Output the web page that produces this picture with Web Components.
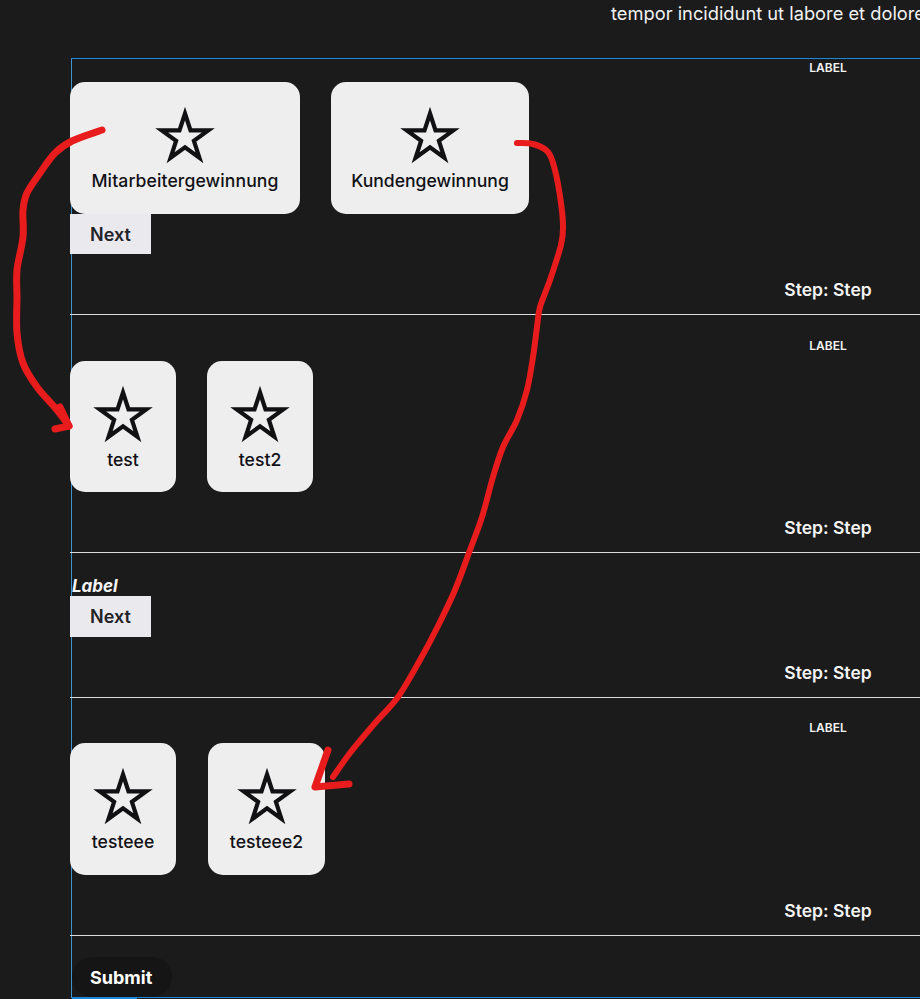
<!DOCTYPE html>
<html lang="de">
<head>
<meta charset="utf-8">
<title>Form</title>
<style>
  html, body {
    margin: 0;
    height: 100%;
    overflow: hidden;
    background: #1b1b1b;
    color: #f4f4f4;
    font-family: Inter, "Liberation Sans", sans-serif;
  }
</style>
</head>
<body>
<page-intro>tempor incididunt ut labore et dolore</page-intro>

<wizard-form>
  <form-step top="23" label="LABEL" label-top="1">
    <div style="display:flex;gap:31px">
      <choice-card style="width:230px;letter-spacing:.1px">Mitarbeitergewinnung</choice-card>
      <choice-card style="width:198px">Kundengewinnung</choice-card>
    </div>
    <flat-button>Next</flat-button>
  </form-step>
  <form-step top="46" label="LABEL" label-top="23">
    <div style="display:flex;gap:31px">
      <choice-card style="width:106px;height:131px">test</choice-card>
      <choice-card style="width:106px;height:131px">test2</choice-card>
    </div>
  </form-step>
  <form-step top="23">
    <field-label>Label</field-label>
    <flat-button style="height:41px">Next</flat-button>
  </form-step>
  <form-step top="45" label="LABEL" label-top="22">
    <div style="display:flex;gap:32px">
      <choice-card style="width:106px">testeee</choice-card>
      <choice-card style="width:117px">testeee2</choice-card>
    </div>
  </form-step>
  <submit-button slot="footer">Submit</submit-button>
</wizard-form>

<red-annotation></red-annotation>

<script>
class PageIntro extends HTMLElement {
  constructor() {
    super();
    this.attachShadow({ mode: "open" });
  }

  connectedCallback() {
    this.shadowRoot.innerHTML = /* html */`
    <style>
      :host {
        display: block;
        height: 58px;
        padding-left: 611px;
        white-space: nowrap;
        font-size: 18.3px;
        line-height: 27px;
        color: #f2f2f2;
      }
    </style>
    <slot></slot>`;
  }
}

class WizardForm extends HTMLElement {
  constructor() {
    super();
    this.attachShadow({ mode: "open" });
  }

  connectedCallback() {
    this.shadowRoot.innerHTML = /* html */`
    <style>
      :host {
        display: block;
        margin-left: 71px;
        border-top: 1px solid #1e88d8;
        border-left: 1px solid #3f93cf;
      }

      .steps {
        margin-left: -2px;
      }

      .footer {
        padding-top: 21px;
      }

      .progress {
        height: 1px;
        background: #1e88d8;
      }

      .progress div {
        width: 65px;
        height: 2px;
        background: #1e88d8;
      }
    </style>
    <div class="steps"><slot></slot></div>
    <div class="footer"><slot name="footer"></slot></div>
    <div class="progress"><div></div></div>`;
  }
}

class FormStep extends HTMLElement {
  constructor() {
    super();
    this.attachShadow({ mode: "open" });
  }

  connectedCallback() {
    const label = this.getAttribute("label");
    const labelTop = this.getAttribute("label-top") || 0;
    this.shadowRoot.innerHTML = /* html */`
    <style>
      :host {
        display: grid;
        grid-template-columns: 1fr 184px;
        border-bottom: 1px solid #dcdcdc;
      }

      .main {
        padding-top: ${this.getAttribute("top")}px;
        padding-bottom: 60px;
      }

      .side {
        display: flex;
        flex-direction: column;
        justify-content: flex-end;
        align-items: center;
        padding-bottom: 13px;
      }

      .label {
        margin-top: ${labelTop}px;
        margin-bottom: auto;
        font-size: 12px;
        line-height: 16px;
        font-weight: 600;
      }

      .step {
        font-size: 17.5px;
        line-height: 22px;
        font-weight: 600;
      }
    </style>
    <div class="main"><slot></slot></div>
    <div class="side">
      ${label ? `<div class="label">${label}</div>` : ""}
      <div class="step">Step: Step</div>
    </div>`;
  }
}

class ChoiceCard extends HTMLElement {
  constructor() {
    super();
    this.attachShadow({ mode: "open" });
  }

  connectedCallback() {
    this.shadowRoot.innerHTML = /* html */`
    <style>
      :host {
        display: flex;
        flex-direction: column;
        align-items: center;
        box-sizing: border-box;
        height: 132px;
        padding-top: 24px;
        border-radius: 15px;
        background: #eeeeee;
        color: #111116;
        font-size: 17.6px;
        line-height: 22px;
        font-weight: 550;
        white-space: nowrap;
      }

      svg {
        display: block;
        width: 64px;
        height: 64px;
        flex: none;
      }
    </style>
    <svg viewBox="0 0 64 64" fill="none" stroke="#111114" stroke-width="4.2" stroke-miterlimit="10">
      <polygon points="32,7.5 37.5,24.43 55.3,24.43 40.9,34.89 46.4,51.82 32,41.36 17.6,51.82 23.1,34.89 8.7,24.43 26.5,24.43"/>
    </svg>
    <slot></slot>`;
  }
}

class FlatButton extends HTMLElement {
  constructor() {
    super();
    this.attachShadow({ mode: "open" });
  }

  connectedCallback() {
    this.shadowRoot.innerHTML = /* html */`
    <style>
      :host {
        display: block;
        box-sizing: border-box;
        width: 81px;
        height: 40px;
        padding-left: 20px;
        background: #e9e9ee;
        color: #222228;
        font-size: 18px;
        line-height: 41px;
        font-weight: 600;
      }
    </style>
    <slot></slot>`;
  }
}

class SubmitButton extends HTMLElement {
  constructor() {
    super();
    this.attachShadow({ mode: "open" });
  }

  connectedCallback() {
    this.shadowRoot.innerHTML = /* html */`
    <style>
      :host {
        display: block;
        box-sizing: border-box;
        width: 100px;
        height: 40px;
        padding-left: 18px;
        border-radius: 20px;
        background: #151515;
        color: #ffffff;
        font-size: 18px;
        line-height: 41px;
        font-weight: 700;
      }
    </style>
    <slot></slot>`;
  }
}

class FieldLabel extends HTMLElement {
  constructor() {
    super();
    this.attachShadow({ mode: "open" });
  }

  connectedCallback() {
    this.shadowRoot.innerHTML = /* html */`
    <style>
      :host {
        display: block;
        height: 20px;
        padding-left: 2px;
        font-size: 17px;
        line-height: 20px;
        font-weight: 700;
        font-style: italic;
      }
    </style>
    <slot></slot>`;
  }
}

// the hand drawn arrows lie over everything, so this one is a free canvas
class RedAnnotation extends HTMLElement {
  constructor() {
    super();
    this.attachShadow({ mode: "open" });
  }

  static smooth(pts) {
    let d = `M${pts[0][0]} ${pts[0][1]}`;
    for (let i = 0; i < pts.length - 1; i++) {
      const p0 = pts[i - 1] || pts[i];
      const p1 = pts[i];
      const p2 = pts[i + 1];
      const p3 = pts[i + 2] || p2;
      const c1 = [p1[0] + (p2[0] - p0[0]) / 6, p1[1] + (p2[1] - p0[1]) / 6];
      const c2 = [p2[0] - (p3[0] - p1[0]) / 6, p2[1] - (p3[1] - p1[1]) / 6];
      d += `C${c1[0]} ${c1[1]} ${c2[0]} ${c2[1]} ${p2[0]} ${p2[1]}`;
    }
    return d;
  }

  connectedCallback() {
    const left = RedAnnotation.smooth([
      [102, 130], [72, 141], [55, 153], [40, 173], [27, 193], [23, 210], [23, 237],
      [17, 270], [17, 297], [17, 333], [23, 363], [37, 387], [57, 410], [69, 426]
    ]);
    const right = RedAnnotation.smooth([
      [517, 143], [533, 144], [548, 152], [555, 170], [561, 203], [563, 227], [561, 245],
      [550, 280], [540, 307], [537, 327], [533, 357], [527, 390], [517, 420], [503, 447],
      [493, 477], [482, 517], [470, 550], [455, 590], [437, 628], [420, 660], [398, 697],
      [375, 723], [350, 753], [333, 777]
    ]);
    this.shadowRoot.innerHTML = /* html */`
    <style>
      :host {
        position: absolute;
        inset: 0;
        pointer-events: none;
      }

      svg {
        display: block;
        width: 920px;
        height: 999px;
      }

      path {
        fill: none;
        stroke: #e81c1c;
        stroke-linecap: round;
        stroke-linejoin: round;
      }
    </style>
    <svg viewBox="0 0 920 999">
      <path stroke-width="7" d="${left}"/>
      <path stroke-width="7" d="M60 407L69 426L55 429"/>
      <path stroke-width="6" d="${right}"/>
      <path stroke-width="7" d="M328 750L315 787L349 784"/>
    </svg>`;
  }
}

customElements.define("page-intro", PageIntro);
customElements.define("wizard-form", WizardForm);
customElements.define("form-step", FormStep);
customElements.define("choice-card", ChoiceCard);
customElements.define("flat-button", FlatButton);
customElements.define("submit-button", SubmitButton);
customElements.define("field-label", FieldLabel);
customElements.define("red-annotation", RedAnnotation);
</script>
</body>
</html>
